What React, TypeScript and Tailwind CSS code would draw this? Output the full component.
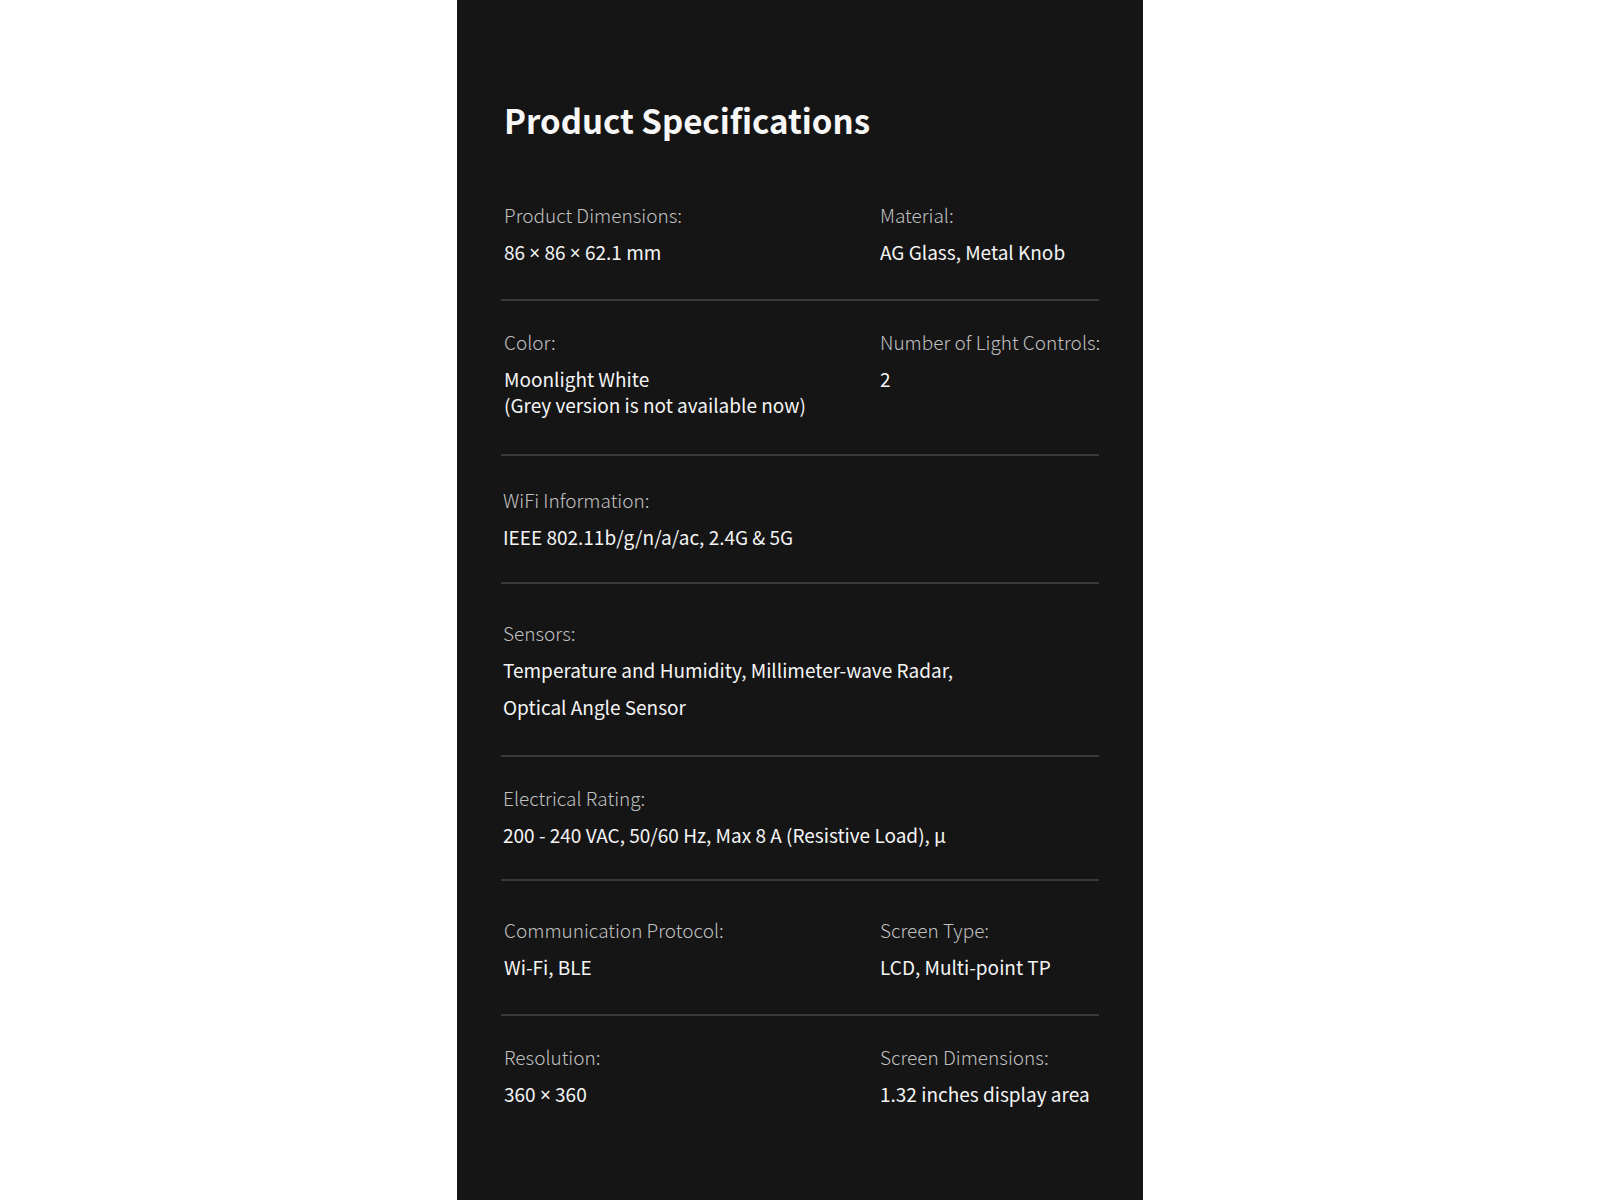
const font = { fontFamily: '"Noto Sans CJK SC", "Noto Sans", sans-serif' };
const times = { fontFamily: '"Noto Sans", "Open Sans", sans-serif' };

type Spec = { label: string; value: string[]; tight?: boolean };

type Row = {
  cells: Spec[];
  pad: string;
  inset: string;
};

const rows: Row[] = [
  {
    pad: 'pt-[60px] pb-[33px]',
    inset: 'pl-[3px]',
    cells: [
      { label: 'Product Dimensions:', value: ['86 × 86 × 62.1 mm'] },
      { label: 'Material:', value: ['AG Glass, Metal Knob'] },
    ],
  },
  {
    pad: 'pt-[28px] pb-[36px]',
    inset: 'pl-[3px]',
    cells: [
      { label: 'Color:', value: ['Moonlight White', '(Grey version is not available now)'], tight: true },
      { label: 'Number of Light Controls:', value: ['2'] },
    ],
  },
  {
    pad: 'pt-[31px] pb-[32px]',
    inset: 'pl-[2px]',
    cells: [{ label: 'WiFi Information:', value: ['IEEE 802.11b/g/n/a/ac, 2.4G & 5G'] }],
  },
  {
    pad: 'pt-[36px] pb-[35px]',
    inset: 'pl-[2px]',
    cells: [
      {
        label: 'Sensors:',
        value: ['Temperature and Humidity, Millimeter-wave Radar,', 'Optical Angle Sensor'],
      },
    ],
  },
  {
    pad: 'pt-[28px] pb-[31px]',
    inset: 'pl-[2px]',
    cells: [{ label: 'Electrical Rating:', value: ['200 - 240 VAC, 50/60 Hz, Max 8 A (Resistive Load), μ'] }],
  },
  {
    pad: 'pt-[36px] pb-[34px]',
    inset: 'pl-[3px]',
    cells: [
      { label: 'Communication Protocol:', value: ['Wi-Fi, BLE'] },
      { label: 'Screen Type:', value: ['LCD, Multi-point TP'] },
    ],
  },
  {
    pad: 'pt-[28px] pb-[34px]',
    inset: 'pl-[3px]',
    cells: [
      { label: 'Resolution:', value: ['360 × 360'] },
      { label: 'Screen Dimensions:', value: ['1.32 inches display area'] },
    ],
  },
];

// the CJK font draws × full width, so take it from a latin font
function Line({ text }: { text: string }) {
  const parts = text.split('×');
  return (
    <>
      {parts.map((p, i) => (
        <span key={i}>
          {p}
          {i < parts.length - 1 && <span style={times}>×</span>}
        </span>
      ))}
    </>
  );
}

function SpecCell({ spec }: { spec: Spec }) {
  return (
    <div className="flex flex-col gap-[11px]">
      <div className="text-[19px] leading-[26px] font-light text-[#c0c0c0] whitespace-nowrap">{spec.label}</div>
      <div className={`flex flex-col ${spec.tight ? '' : 'gap-[11px]'}`}>
        {spec.value.map((line) => (
          <div key={line} className="text-[19px] leading-[26px] text-[#f4f4f4] whitespace-nowrap">
            <Line text={line} />
          </div>
        ))}
      </div>
    </div>
  );
}

export default function App() {
  return (
    <div className="min-h-screen bg-white" style={font}>
      <div className="mx-auto w-[686px] min-h-[1200px] bg-[#151515] px-[44px] pt-[98px] pb-[80px]">
        <h1 className="pl-[3px] text-[33px] leading-[44px] font-bold text-[#f7f7f7]">Product Specifications</h1>

        {rows.map((row, i) => (
          <div
            key={i}
            className={`${row.pad} ${row.inset} ${i < rows.length - 1 ? 'border-b-2 border-[#393939]' : ''}`}
          >
            <div className="grid grid-cols-[376px_1fr]">
              {row.cells.map((c) => (
                <SpecCell key={c.label} spec={c} />
              ))}
            </div>
          </div>
        ))}
      </div>
    </div>
  );
}
